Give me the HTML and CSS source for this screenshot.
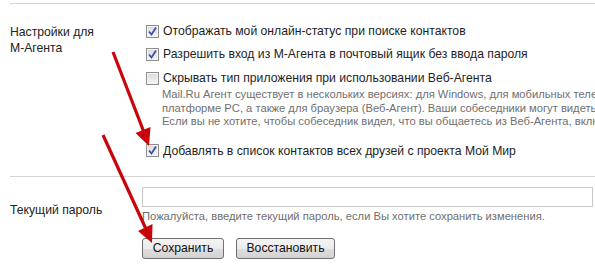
FILE: index.html
```html
<!DOCTYPE html>
<html lang="ru">
<head>
  <meta charset="UTF-8">
  <title>Настройки</title>
  <link rel="stylesheet" href="styles.css">
</head>
<body>

<div id="page">
  <div class="section agent-section">
    <div class="label">Настройки для<br>М-Агента</div>
    <div class="options">
      <div class="option">
        <span class="box checked"><svg viewBox="0 0 11 11"><path d="M2 5.5 L4.5 8.5 L9 1.5"/></svg></span>
        <span class="option-text">Отображать мой онлайн-статус при поиске контактов</span>
      </div>
      <div class="option">
        <span class="box checked"><svg viewBox="0 0 11 11"><path d="M2 5.5 L4.5 8.5 L9 1.5"/></svg></span>
        <span class="option-text">Разрешить вход из М-Агента в почтовый ящик без ввода пароля</span>
      </div>
      <div class="option">
        <span class="box"></span>
        <span class="option-text">Скрывать тип приложения при использовании Веб-Агента</span>
      </div>
      <div class="description">
        <div>Mail.Ru Агент существует в нескольких версиях: для Windows, для мобильных телефонов,</div>
        <div>платформе PC, а также для браузера (Веб-Агент). Ваши собеседники могут видеть, какой</div>
        <div>Если вы не хотите, чтобы собеседник видел, что вы общаетесь из Веб-Агента, включите</div>
      </div>
      <div class="option last-option">
        <span class="box checked"><svg viewBox="0 0 11 11"><path d="M2 5.5 L4.5 8.5 L9 1.5"/></svg></span>
        <span class="option-text">Добавлять в список контактов всех друзей с проекта Мой Мир</span>
      </div>
    </div>
  </div>

  <div class="section password-section">
    <div class="label">Текущий пароль</div>
    <div class="field">
      <input type="password" class="text-input">
      <div class="hint">Пожалуйста, введите текущий пароль, если Вы хотите сохранить изменения.</div>
      <div class="buttons">
        <button class="button save-button">Сохранить</button>
        <button class="button reset-button">Восстановить</button>
      </div>
    </div>
  </div>
</div>

<!-- red arrows drawn over the form -->
<svg id="arrows" width="595" height="277" viewBox="0 0 595 277">
  <line x1="113" y1="52" x2="143.5" y2="131" />
  <polygon points="149,146 150.5,127 135.5,133" />
  <line x1="103" y1="135" x2="145.5" y2="228" />
  <polygon points="152,243 152.5,224 138,231" />
</svg>

</body>
</html>
```

FILE: styles.css
```css
body {
  margin: 0;
  background-color: #fff;
  color: #222;
  font-family: 'Liberation Sans', Arial, sans-serif;
  font-size: 12.2px;
  overflow: hidden;
}

#page {
  position: relative;
  width: 595px;
  height: 277px;
  overflow: hidden;
}

.section {
  display: grid;
  grid-template-columns: 132px 1fr;
  margin-left: 10px;
  border-top: 1px solid #d6d6d6;
}

.agent-section {
  margin-top: 3px;
  padding-top: 19px;
  padding-bottom: 17px;
}

.label {
  line-height: 16px;
  color: #222;
}

.agent-section .label {
  padding-top: 1px;
}

.options {
  min-width: 0;
}

.option {
  display: flex;
  align-items: center;
  height: 16px;
  margin-bottom: 7px;
  white-space: nowrap;
}

.option:nth-child(2) {
  margin-bottom: 8px;
}

.option:nth-child(3) {
  margin-bottom: 2px;
}

.last-option {
  margin-top: 14px;
  margin-bottom: 0;
}

.box {
  box-sizing: border-box;
  display: inline-block;
  width: 13px;
  height: 13px;
  margin-left: 4px;
  margin-right: 4px;
  border: 1px solid #8e8f8f;
  background: linear-gradient(#d9d9d9, #f7f7f7);
  box-shadow: inset 0 0 0 1px #f4f4f4;
  flex-shrink: 0;
}

.box svg {
  display: block;
  width: 11px;
  height: 11px;
}

.box path {
  fill: none;
  stroke: #3e4fb4;
  stroke-width: 1.8;
}

.option-text {
  color: #1e1e1e;
}

.description {
  margin-left: 20px;
  font-size: 11.2px;
  line-height: 13.5px;
  color: #6f6f6f;
  white-space: nowrap;
}

.password-section {
  padding-top: 10px;
}

.password-section .label {
  padding-top: 15px;
}

.field {
  min-width: 0;
}

.text-input {
  display: block;
  box-sizing: border-box;
  width: 451px;
  height: 20px;
  margin: 0;
  border: 1px solid #c9c9c9;
  background-color: #fff;
  outline: none;
}

.hint {
  margin-top: 2px;
  font-size: 11.2px;
  line-height: 14px;
  color: #6f6f6f;
  white-space: nowrap;
}

.buttons {
  display: flex;
  gap: 12px;
  margin-top: 15px;
}

.button {
  box-sizing: border-box;
  height: 21px;
  padding: 0;
  border: 1px solid #707070;
  border-radius: 3px;
  background: linear-gradient(#f4f4f4 0%, #ececec 50%, #dedede 51%, #d3d3d3 100%);
  color: #111;
  font-family: 'Liberation Sans', Arial, sans-serif;
  font-size: 12.2px;
  cursor: pointer;
}

.save-button {
  width: 82px;
}

.reset-button {
  width: 99px;
}

#arrows {
  position: absolute;
  left: 0;
  top: 0;
  pointer-events: none;
}

#arrows line {
  stroke: #c8050b;
  stroke-width: 3.2;
}

#arrows polygon {
  fill: #c8050b;
}
```
